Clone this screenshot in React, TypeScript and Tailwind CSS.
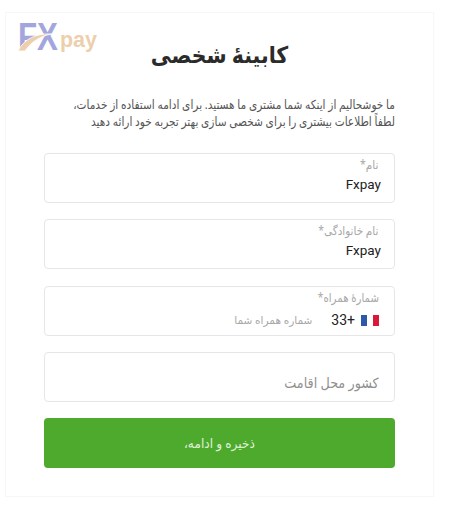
export default function App() {
  const font = { fontFamily: '"Noto Sans", "DejaVu Sans", sans-serif' };
  const latin = { fontFamily: '"Roboto", sans-serif' };
  return (
    <div className="relative w-[450px] h-[514px] bg-white overflow-hidden pt-[12px] pl-[5px]" style={font}>
      <div className="absolute left-[18px] top-[18px]">
        <svg width="84" height="40" viewBox="0 0 84 40">
          <text x="0" y="32" direction="ltr" fontFamily="Liberation Sans" fontWeight="700" fontSize="39" fill="#a3a6dc" textLength="40" lengthAdjust="spacingAndGlyphs">FX</text>
          <path d="M0 33 C6 21 18 15 34 16 C22 18 13 24 7 33 Z" fill="#edcfae" stroke="#ffffff" strokeWidth="0.8" />
          <text x="42" y="29" direction="ltr" fontFamily="Liberation Sans" fontWeight="700" fontSize="22" fill="#ecd0ad" textLength="37" lengthAdjust="spacingAndGlyphs">pay</text>
        </svg>
      </div>
      <div dir="rtl" className="w-[429px] h-[485px] bg-white border border-[#f7f7f7] px-[38px] pt-[25px]">
        <h1 className="text-center text-[23px] leading-[32px] font-bold tracking-[-0.8px] text-[#2b2b2b] scale-x-[.89]">کابینهٔ شخصی</h1>
        <p className="mt-[26px] text-[12.5px] leading-[17px] tracking-[-0.2px] text-[#555555] whitespace-nowrap scale-x-[.845] origin-right">
          ما خوشحالیم از اینکه شما مشتری ما هستید. برای ادامه استفاده از خدمات،
          <br />
          لطفاً اطلاعات بیشتری را برای شخصی سازی بهتر تجربه خود ارائه دهید
        </p>
        <div className="mt-[23px] flex flex-col gap-[16.25px]">
          <div className="h-[50px] border border-[#e6e6e6] rounded-[4px] px-[13px] pt-[2px]">
            <div className="text-[12px] leading-[18px] text-[#a8a8a8] pr-[3px] tracking-[-0.3px] scale-x-[.87] origin-right">نام*</div>
            <div dir="ltr" className="text-right text-[13.5px] leading-[20px] text-[#222222]" style={latin}>Fxpay</div>
          </div>
          <div className="h-[50px] border border-[#e6e6e6] rounded-[4px] px-[13px] pt-[2px]">
            <div className="text-[12px] leading-[18px] text-[#a8a8a8] pr-[3px] tracking-[-0.3px] scale-x-[.87] origin-right">نام خانوادگی*</div>
            <div dir="ltr" className="text-right text-[13.5px] leading-[20px] text-[#222222]" style={latin}>Fxpay</div>
          </div>
          <div className="h-[50px] border border-[#e6e6e6] rounded-[4px] px-[15px] pt-[2px]">
            <div className="text-[12px] leading-[18px] text-[#a8a8a8] tracking-[-0.3px] scale-x-[.85] origin-right">شمارهٔ همراه*</div>
            <div className="flex items-center mt-[5px] h-[18px]">
              <div dir="ltr" className="flex w-[18px] h-[11px] shrink-0">
                <span className="w-[6px] bg-[#2d5aa8]" />
                <span className="w-[6px] bg-white" />
                <span className="w-[6px] bg-[#d8193c]" />
              </div>
              <span className="mr-[6px] text-[14px] text-[#222222]" style={latin}>+33</span>
              <span className="mr-[19px] text-[10.5px] text-[#a8a8a8]">شماره همراه شما</span>
            </div>
          </div>
          <div className="h-[50px] border border-[#e6e6e6] rounded-[4px] px-[15px] flex items-center pt-[11px]">
            <span className="text-[14px] tracking-[-0.3px] text-[#8f8f8f] scale-x-[.91] origin-right">کشور محل اقامت</span>
          </div>
          <button className="h-[50px] rounded-[4px] bg-[#4eaa2c] text-[#dff0d6] flex items-center justify-center">
            <span className="text-[13.5px] scale-x-[.9]">ذخیره و ادامه،</span>
          </button>
        </div>
      </div>
    </div>
  );
}
